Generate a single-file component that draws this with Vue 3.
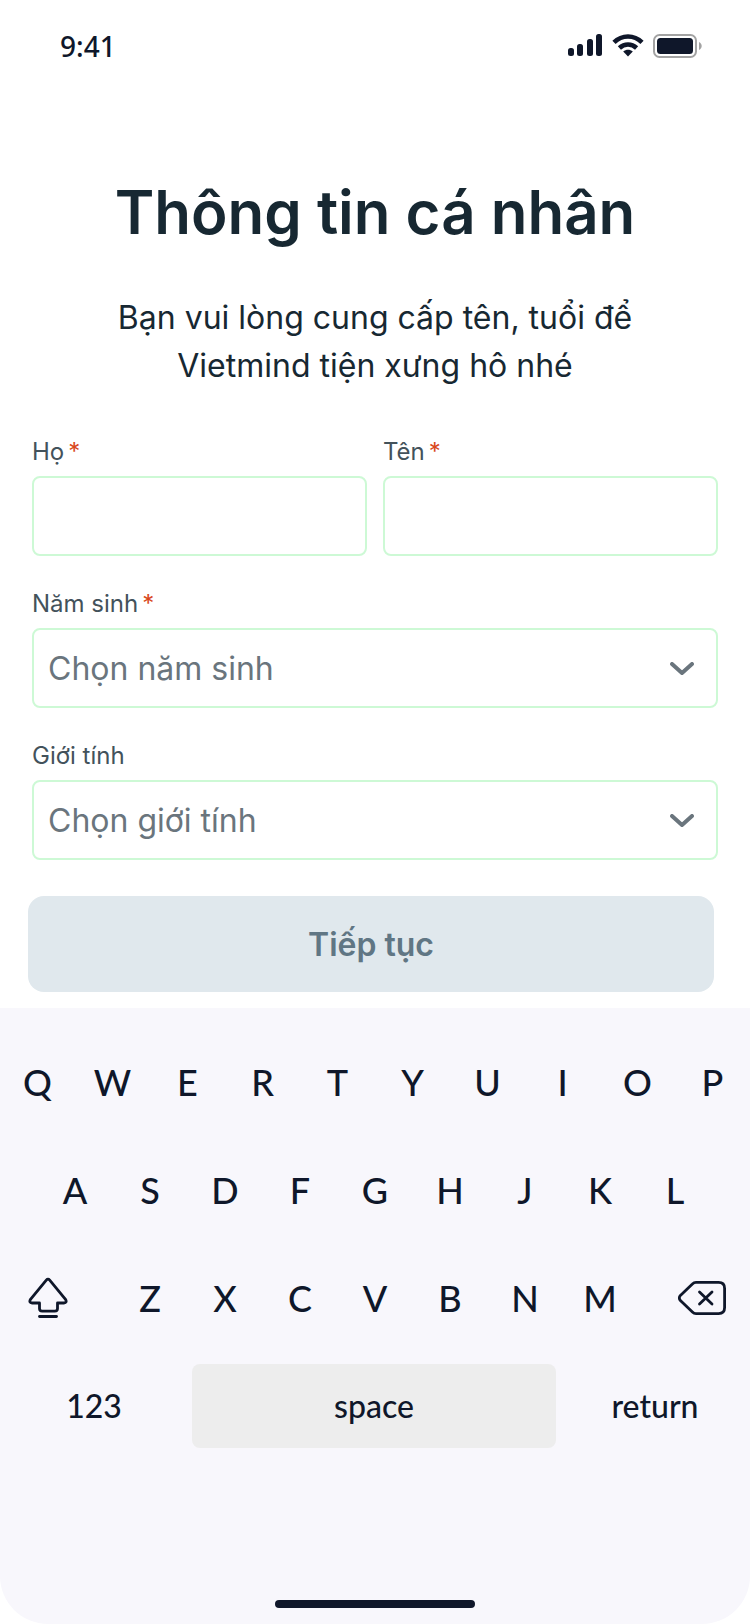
<script setup>
import { ref } from 'vue'

const lastName = ref('')
const firstName = ref('')
const birthYear = ref('')
const gender = ref('')

const years = Array.from({ length: 60 }, (_, i) => 2010 - i)
const genders = ['Nam', 'Nữ', 'Khác']

const topRow = [...'QWERTYUIOP']
const homeRow = [...'ASDFGHJKL']
const bottomRow = [...'ZXCVBNM']
</script>

<template>
  <div class="screen">
    <header class="status">
      <span class="time">9:41</span>
      <div class="indicators">
        <svg width="36" height="24" viewBox="0 0 36 24" fill="#0f172a" aria-hidden="true">
          <rect x="1" y="14" width="6" height="8" rx="2.5" />
          <rect x="10" y="10" width="6" height="12" rx="2.5" />
          <rect x="20" y="5" width="6" height="17" rx="2.5" />
          <rect x="29" y="0" width="6" height="22" rx="2.5" />
        </svg>
        <svg width="32" height="24" viewBox="0 0 32 24" fill="none" aria-hidden="true">
          <path d="M2 8.4C10 .6 22 .6 30 8.4" stroke="#0f172a" stroke-width="4.6" />
          <path d="M7.4 14C12.4 9.4 19.6 9.4 24.6 14" stroke="#0f172a" stroke-width="4.6" />
          <path d="M11.2 17.6C14 15.2 18 15.2 20.8 17.6L16 22.4Z" fill="#0f172a" />
        </svg>
        <svg width="50" height="24" viewBox="0 0 50 24" fill="none" aria-hidden="true">
          <rect x="1" y="1" width="42" height="22" rx="5.5" stroke="#a3a3a3" stroke-width="2" />
          <rect x="4" y="4" width="36" height="16" rx="3.5" fill="#0f172a" />
          <path d="M46 8C49.6 9.4 49.6 14.6 46 16Z" fill="#a3a3a3" />
        </svg>
      </div>
    </header>

    <main>
      <h1>Thông tin cá nhân</h1>
      <p class="intro">Bạn vui lòng cung cấp tên, tuổi để<br />Vietmind tiện xưng hô nhé</p>

      <form @submit.prevent>
        <div class="fields">
          <div class="pair">
            <div class="field">
              <label for="last-name">Họ<span class="req">*</span></label>
              <input id="last-name" v-model="lastName" type="text" />
            </div>
            <div class="field">
              <label for="first-name">Tên<span class="req">*</span></label>
              <input id="first-name" v-model="firstName" type="text" />
            </div>
          </div>
          <div class="field">
            <label for="birth-year">Năm sinh<span class="req">*</span></label>
            <div class="select">
              <select id="birth-year" v-model="birthYear">
                <option value="" disabled>Chọn năm sinh</option>
                <option v-for="y in years" :key="y" :value="y">{{ y }}</option>
              </select>
              <svg class="chevron" width="24" height="14" viewBox="0 0 24 14" fill="none" aria-hidden="true">
                <path d="M2 2L12 11L22 2" stroke="#6a757d" stroke-width="4" stroke-linecap="round" stroke-linejoin="round" />
              </svg>
            </div>
          </div>
          <div class="field">
            <label for="gender">Giới tính</label>
            <div class="select">
              <select id="gender" v-model="gender">
                <option value="" disabled>Chọn giới tính</option>
                <option v-for="g in genders" :key="g" :value="g">{{ g }}</option>
              </select>
              <svg class="chevron" width="24" height="14" viewBox="0 0 24 14" fill="none" aria-hidden="true">
                <path d="M2 2L12 11L22 2" stroke="#6a757d" stroke-width="4" stroke-linecap="round" stroke-linejoin="round" />
              </svg>
            </div>
          </div>
        </div>
        <div class="actions">
          <button class="submit" type="submit">Tiếp tục</button>
        </div>
      </form>
    </main>

    <section class="keyboard" aria-label="Bàn phím">
      <div class="keys top-row">
        <button v-for="k in topRow" :key="k" class="key" type="button">{{ k }}</button>
      </div>
      <div class="keys home-row">
        <button v-for="k in homeRow" :key="k" class="key" type="button">{{ k }}</button>
      </div>
      <div class="keys bottom-row">
        <button class="key shift" type="button" aria-label="Shift">
          <svg width="40" height="42" viewBox="0 0 40 42" fill="none" stroke="#0f172a" stroke-width="2.8" stroke-linecap="round" stroke-linejoin="round" aria-hidden="true">
            <path d="M18.3 3.2Q20 1.2 21.7 3.2L37.5 22.3Q39.4 25.6 35.8 26H29.5V31.5Q29.5 34.2 26.8 34.2H14.2Q11.5 34.2 11.5 31.5V26H4.2Q.6 25.6 2.5 22.3Z" />
            <path d="M11.5 39.5H28.5" />
          </svg>
        </button>
        <button v-for="k in bottomRow" :key="k" class="key" type="button">{{ k }}</button>
        <button class="key delete" type="button" aria-label="Delete">
          <svg width="48" height="36" viewBox="0 0 48 36" fill="none" stroke="#0f172a" stroke-width="2.8" stroke-linecap="round" stroke-linejoin="round" aria-hidden="true">
            <path d="M18 2.4H40.6Q46.6 2.4 46.6 8.4V27.6Q46.6 33.6 40.6 33.6H18Q16 33.6 14.4 32L2.4 20.6Q.2 18 2.4 15.4L14.4 4Q16 2.4 18 2.4Z" />
            <path d="M21.5 12L34 24M34 12L21.5 24" />
          </svg>
        </button>
      </div>
      <div class="keys last-row">
        <button class="key word" type="button">123</button>
        <button class="key word space" type="button">space</button>
        <button class="key word" type="button">return</button>
      </div>
      <div class="home"></div>
    </section>
  </div>
</template>

<style>
body {
  margin: 0;
  background: #fff;
}
</style>

<style scoped>
.screen {
  display: flex;
  flex-direction: column;
  min-height: 100vh;
  background: #fff;
  color: #172832;
  font-family: Inter, Roboto, sans-serif;
}

.screen *,
.screen {
  box-sizing: border-box;
}

.status {
  display: flex;
  align-items: center;
  justify-content: space-between;
  padding: 26px 47px 26px 60px;
  color: #0f172a;
}

.time {
  font: 500 28px/40px "Noto Sans", sans-serif;
}

.indicators {
  display: flex;
  align-items: center;
  gap: 9px;
}

h1 {
  margin: 82px 32px 0;
  font-size: 60px;
  font-weight: 600;
  line-height: 76px;
  text-align: center;
}

.intro {
  margin: 44px 32px 46px;
  font-size: 32px;
  line-height: 48px;
  text-align: center;
}

.fields {
  display: flex;
  flex-direction: column;
  gap: 32px;
  padding: 0 32px;
}

.pair {
  display: grid;
  grid-template-columns: 1fr 1fr;
  gap: 16px;
}

.field {
  display: flex;
  flex-direction: column;
  gap: 8px;
}

label {
  color: #43525b;
  font-size: 24px;
  line-height: 32px;
}

.req {
  margin-left: 4px;
  color: #d9481c;
}

input,
select {
  width: 100%;
  height: 80px;
  margin: 0;
  padding: 0 14px;
  border: 2px solid #cdf9d5;
  border-radius: 8px;
  background: #fff;
  color: #6a757d;
  font: inherit;
  font-size: 32px;
  appearance: none;
}

.select {
  position: relative;
}

.chevron {
  position: absolute;
  top: 34px;
  right: 24px;
  pointer-events: none;
}

.actions {
  padding: 36px 36px 16px 28px;
}

.submit {
  display: block;
  width: 100%;
  height: 96px;
  border: 0;
  border-radius: 16px;
  background: #e0e8ed;
  color: #607684;
  font: inherit;
  font-size: 32px;
  font-weight: 600;
}

.keyboard {
  display: flex;
  flex: 1;
  flex-direction: column;
  gap: 24px;
  padding: 32px 0 16px;
  border-radius: 0 0 48px 48px;
  background: #f8f7fc;
}

.keys {
  display: grid;
}

.top-row {
  grid-template-columns: repeat(10, 1fr);
}

.home-row {
  grid-template-columns: repeat(9, 1fr);
  padding: 0 5%;
}

.bottom-row {
  grid-template-columns: 3fr repeat(7, 2fr) 3fr;
}

.last-row {
  grid-template-columns: 188px 1fr 190px;
  gap: 4px;
}

.key {
  display: flex;
  align-items: center;
  justify-content: center;
  height: 84px;
  padding: 0;
  border: 0;
  border-radius: 8px;
  background: none;
  color: #0f172a;
  font: 500 36px/48px Lato, sans-serif;
}

.shift {
  padding-right: 16px;
}

.delete {
  padding-left: 16px;
}

.word {
  font-size: 32px;
}

.space {
  background: #ededed;
}

.home {
  width: 200px;
  height: 8px;
  margin: auto auto 0;
  border-radius: 4px;
  background: #0f172a;
}
</style>
